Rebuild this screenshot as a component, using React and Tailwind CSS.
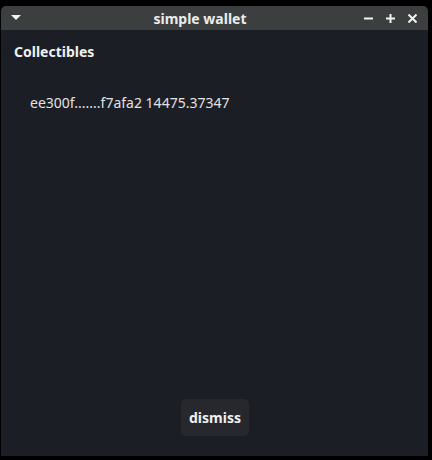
export default function App() {
  return (
    <div className="w-[432px] h-[460px] bg-black pt-[6px] pl-[1px]" style={{ fontFamily: '"Noto Sans", "Open Sans", sans-serif' }}>
      <div className="w-[427px] h-[450px] flex flex-col rounded-t-[5px] overflow-hidden">
        {/* barre de titre */}
        <div className="h-[24px] bg-[#3b3f40] flex items-center px-[10px] relative">
          <svg width="10" height="6" viewBox="0 0 10 6">
            <path d="M0 0 H10 L5 5 Z" fill="#f2f2f2" />
          </svg>
          <div className="absolute inset-0 flex items-center justify-center pr-[29px] text-[14px] font-bold text-[#ececec]">
            simple wallet
          </div>
          <div className="ml-auto flex items-center gap-[13px] pr-[1px]">
            <svg width="9" height="9" viewBox="0 0 9 9">
              <path d="M0 4.5 H9" stroke="#f2f2f2" strokeWidth="2" />
            </svg>
            <svg width="9" height="9" viewBox="0 0 9 9">
              <path d="M0 4.5 H9 M4.5 0 V9" stroke="#f2f2f2" strokeWidth="2" />
            </svg>
            <svg width="9" height="9" viewBox="0 0 9 9">
              <path d="M0.5 0.5 L8.5 8.5 M8.5 0.5 L0.5 8.5" stroke="#f2f2f2" strokeWidth="2" />
            </svg>
          </div>
        </div>

        {/* contenu */}
        <div className="flex-1 bg-[#1b1e25] flex flex-col px-[13px] pt-[12px] pb-[20px]">
          <div className="text-[14px] font-bold text-[#f0f0f0] leading-[20px]">Collectibles</div>
          <div className="pl-[16px] mt-[31px] text-[14px] text-[#e2e2e2] leading-[20px]">
            ee300f.......f7afa2 14475.37347
          </div>
          <div className="mt-auto flex justify-center">
            <button className="w-[68px] h-[37px] rounded-[5px] bg-[#27282d] text-[14px] font-bold text-[#f0f0f0] ml-[1px]">
              dismiss
            </button>
          </div>
        </div>
      </div>
    </div>
  );
}
